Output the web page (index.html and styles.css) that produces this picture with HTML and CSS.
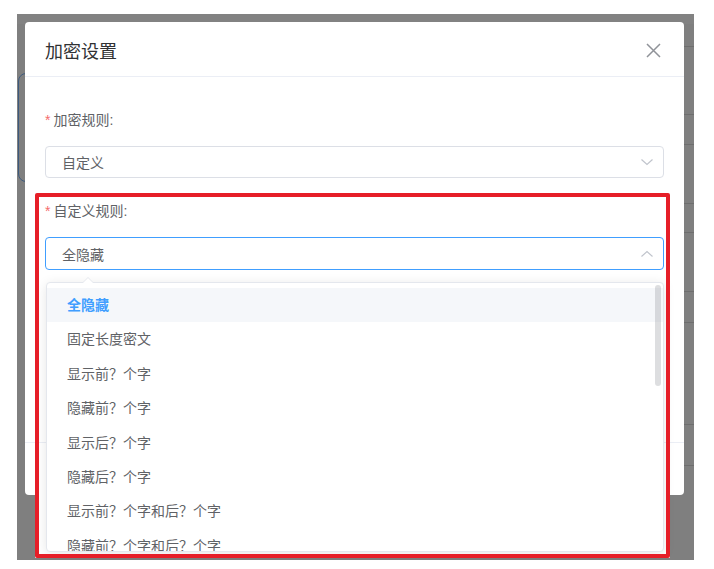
FILE: index.html
```html
<!DOCTYPE html>
<html lang="zh-CN">
<head>
    <meta charset="UTF-8">
    <meta name="viewport" content="width=device-width, initial-scale=1.0">
    <title>加密设置</title>
    <link rel="stylesheet" href="styles.css">
</head>
<body>
    <div class="screen">
        <!-- page behind the dialog mask -->
        <div class="page">
            <div class="page-left">
                <div class="page-card"></div>
            </div>
            <div class="page-rows">
                <div class="row"></div>
                <div class="row"></div>
                <div class="row"></div>
                <div class="row"></div>
                <div class="row"></div>
                <div class="row"></div>
                <div class="row"></div>
                <div class="row"></div>
                <div class="row"></div>
            </div>
        </div>

        <div class="mark-fill"></div>

        <div class="dialog">
            <div class="dialog-header">
                <span class="dialog-title">加密设置</span>
                <svg class="close" width="15" height="15" viewBox="0 0 15 15">
                    <path d="M1 1 L14 14 M14 1 L1 14" stroke="#909399" stroke-width="1.5" fill="none"/>
                </svg>
            </div>
            <div class="dialog-body">
                <div class="form-item">
                    <div class="label"><span class="req">*</span>加密规则:</div>
                    <div class="select">
                        <span>自定义</span>
                        <svg class="arrow" width="12" height="8" viewBox="0 0 12 8">
                            <path d="M0.5 1.5 L6 6.5 L11.5 1.5" stroke="#c0c4cc" stroke-width="1.2" fill="none"/>
                        </svg>
                    </div>
                </div>
                <div class="form-item">
                    <div class="label"><span class="req">*</span>自定义规则:</div>
                    <div class="select is-focus">
                        <span>全隐藏</span>
                        <svg class="arrow" width="12" height="8" viewBox="0 0 12 8">
                            <path d="M0.5 6.5 L6 1.5 L11.5 6.5" stroke="#c0c4cc" stroke-width="1.2" fill="none"/>
                        </svg>
                    </div>
                </div>
            </div>
            <div class="dialog-footer"></div>
        </div>

        <div class="dropdown">
            <ul class="options">
                <li class="selected">全隐藏</li>
                <li>固定长度密文</li>
                <li>显示前？个字</li>
                <li>隐藏前？个字</li>
                <li>显示后？个字</li>
                <li>隐藏后？个字</li>
                <li>显示前？个字和后？个字</li>
                <li>隐藏前？个字和后？个字</li>
            </ul>
            <div class="scroll-thumb"></div>
        </div>

        <div class="mark"></div>
    </div>
</body>
</html>
```

FILE: styles.css
```css
* {
    padding: 0;
    margin: 0;
    box-sizing: border-box;
}

body {
    background-color: #ffffff;
    font-family: "Liberation Sans", "Noto Sans CJK SC", sans-serif;
}

.screen {
    position: relative;
    margin: 14px 0 0 17px;
    width: 677px;
    height: 546px;
    background-color: #7f7f7f;
    overflow: hidden;
}

/* page under the mask */
.page {
    display: flex;
    justify-content: space-between;
    height: 100%;
    border-top: 10px solid #828282;
}

.page-left {
    width: 120px;
}

.page-card {
    margin-top: 49px;
    margin-left: 1px;
    height: 109px;
    border: 1px solid #3d5a7e;
    border-radius: 8px;
}

.page-rows {
    width: 200px;
}

.row {
    border-bottom: 1px solid #6e6e6e;
    height: 23px;
}

.row:nth-child(2) { height: 68px; }
.row:nth-child(3) { height: 30px; }
.row:nth-child(4) { height: 59px; }
.row:nth-child(5) { height: 29px; }
.row:nth-child(6) { height: 59px; }
.row:nth-child(7) { height: 31px; }
.row:nth-child(8) { height: 102px; }
.row:nth-child(9) { height: 41px; }

/* dialog */
.dialog {
    position: absolute;
    left: 8px;
    top: 8px;
    z-index: 2;
    width: 659px;
    height: 473px;
    background-color: #ffffff;
    border-radius: 4px;
    display: flex;
    flex-direction: column;
}

.dialog-header {
    height: 55px;
    padding: 0 23px 0 20px;
    display: flex;
    justify-content: space-between;
    align-items: center;
    border-bottom: 1px solid #ebeef5;
}

.dialog-title {
    font-size: 18px;
    color: #303133;
    margin-top: 2px;
}

.close {
    display: block;
    margin-top: 2px;
}

.dialog-body {
    padding: 33px 20px 0;
}

.form-item {
    margin-bottom: 23px;
}

.label {
    font-size: 14px;
    line-height: 20px;
    color: #606266;
    margin-bottom: 16px;
}

.req {
    color: #f56c6c;
    margin-right: 3px;
}

.select {
    height: 32px;
    border: 1px solid #dcdfe6;
    border-radius: 4px;
    padding: 0 10px 0 16px;
    display: flex;
    justify-content: space-between;
    align-items: center;
    font-size: 14px;
    color: #606266;
}

.select.is-focus {
    border-color: #409eff;
    height: 33px;
}

.arrow {
    display: block;
}

.dialog-footer {
    margin-top: auto;
    height: 53px;
    border-top: 1px solid #ebeef5;
}

/* select dropdown */
.dropdown {
    position: absolute;
    left: 29px;
    top: 268px;
    z-index: 3;
    width: 618px;
    height: 270px;
    background-color: #ffffff;
    border: 1px solid #e4e7ed;
    border-radius: 4px;
    box-shadow: 0 2px 12px rgba(0, 0, 0, 0.1);
}

.dropdown::before,
.dropdown::after {
    content: "";
    position: absolute;
    left: 35px;
    border: 6px solid transparent;
    border-top-width: 0;
}

.dropdown::before {
    top: -6px;
    border-bottom-color: #e4e7ed;
}

.dropdown::after {
    top: -5px;
    border-bottom-color: #ffffff;
}

.options {
    list-style: none;
    padding-top: 5px;
    height: 100%;
    overflow: hidden;
}

.options li {
    height: 34.4px;
    line-height: 34.4px;
    padding: 0 20px;
    font-size: 14px;
    color: #606266;
}

.options li.selected {
    color: #409eff;
    font-weight: bold;
    background-color: #f5f7fa;
}

.scroll-thumb {
    position: absolute;
    right: 2px;
    top: 2px;
    width: 6px;
    height: 101px;
    border-radius: 4px;
    background-color: rgba(144, 147, 153, 0.3);
}

/* red annotation box */
.mark,
.mark-fill {
    position: absolute;
    left: 18px;
    top: 179px;
    width: 635px;
    height: 365px;
}

.mark-fill {
    z-index: 1;
    background-color: #ffffff;
}

.mark {
    z-index: 4;
    border: 4px solid #e61e28;
    border-radius: 2px;
}
```
